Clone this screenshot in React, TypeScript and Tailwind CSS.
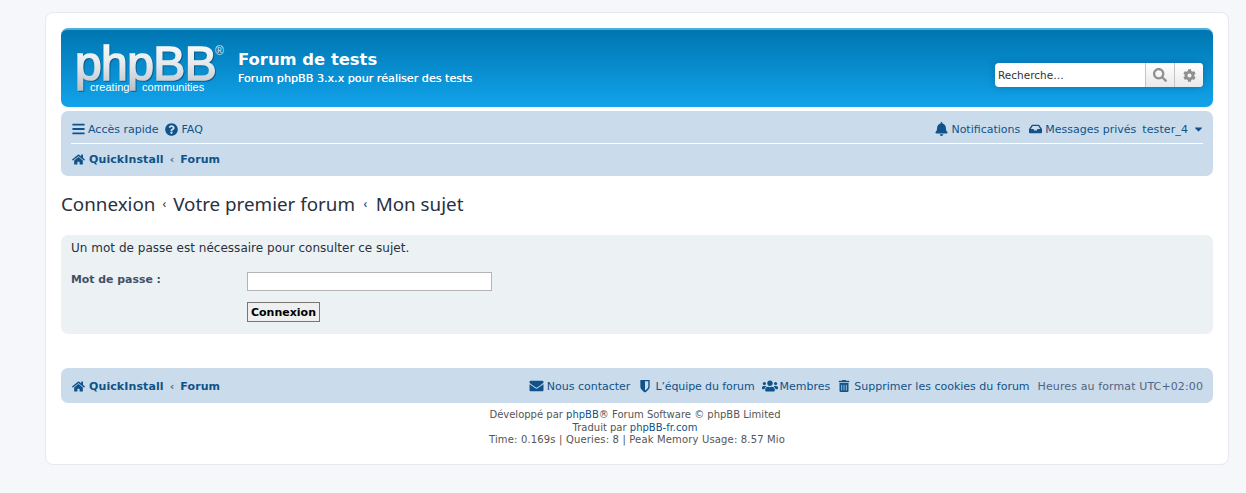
import React from 'react';
import { FaBars, FaQuestionCircle, FaHome, FaBell, FaInbox, FaEnvelope, FaUsers, FaTrashAlt, FaSearch, FaCog, FaCaretDown } from 'react-icons/fa';

const Logo = () => (
  <svg width="160" height="56" viewBox="0 0 160 56" className="shrink-0 overflow-visible">
    <defs>
      <linearGradient id="logoFill" x1="0" y1="0" x2="0" y2="1">
        <stop offset="0" stopColor="#ffffff" />
        <stop offset="0.55" stopColor="#e4e7ea" />
        <stop offset="1" stopColor="#b9c1c7" />
      </linearGradient>
    </defs>
    <text x="-2" y="38" fontFamily="'Liberation Sans', sans-serif" fontSize="48" letterSpacing="-0.6" fill="url(#logoFill)" stroke="url(#logoFill)" strokeWidth="1.6" className="[filter:drop-shadow(1px_1px_0_rgba(6,84,132,0.8))]">phpBB</text>
    <text x="138" y="13" fontFamily="'Liberation Sans', sans-serif" fontSize="12" fill="#dfe8ee">®</text>
    <text x="13" y="49" fontFamily="'Liberation Sans', sans-serif" fontSize="11" letterSpacing="0.05" fill="#ffffff">creating</text>
    <text x="65" y="49" fontFamily="'Liberation Sans', sans-serif" fontSize="11" letterSpacing="0.05" fill="#ffffff">communities</text>
  </svg>
);

const ShieldIcon = () => (
  <svg viewBox="0 0 12 15" className="w-[12px] h-[14px] mr-[4px]" fill="currentColor">
    <path fillRule="evenodd" d="M1 1h10v7c0 3-3 5-5 6.500c-2-1.500-5-3.500-5-6.500zM6 2.500v9.800c1.500-1 3.500-2.500 3.500-4.300v-5.500z" />
  </svg>
);

const Crumbs = () => (
  <span className="flex items-center font-bold text-[#105289] text-[11px] tracking-[0.1px] ml-px">
    <FaHome className="w-[13px] h-[13px] mr-[4px]" />
    <span>QuickInstall</span>
    <span className="mx-[6px] text-[#47708f]">‹</span>
    <span>Forum</span>
  </span>
);

export default function App() {
  return (
    <div className="min-h-[493px] bg-[#f5f7fa] pt-3 pl-[45px] font-['DejaVu_Sans','Verdana',sans-serif] text-[#536482] text-[11px] leading-[13px]">
      <div className="w-[1184px] h-[453px] bg-white border border-[#e6e9ed] rounded-[8px] px-[15px] pt-[15px]">
        <div className="h-[79px] rounded-[7px] bg-gradient-to-b from-[#0076b1] to-[#12a3eb] border-t-2 border-[#4fb0dd] flex pl-[16px] pr-[10px]">
          <div className="pt-[12px] w-[150px]">
            <Logo />
          </div>
          <div className="ml-[11px] pt-[19px] text-white">
            <div className="text-[16.4px] leading-[21px] font-bold">Forum de tests</div>
            <div className="mt-[2px] text-[11.15px] leading-[14px] [text-shadow:0_0_0.6px_white]">Forum phpBB 3.x.x pour réaliser des tests</div>
          </div>
          <div className="ml-auto mt-[33px] h-[24px] w-[208px] flex rounded-[4px] bg-white shadow-[0_0_6px_rgba(0,60,100,0.35)] overflow-hidden">
            <div className="w-[150px] pl-[3px] text-[10.5px] leading-[24px] text-[#333]">Recherche…</div>
            <div className="w-[29px] border-l border-[#c7c3bf] bg-gradient-to-b from-white to-[#e9e9e9] flex items-center justify-center">
              <FaSearch className="w-[14px] h-[14px] text-[#8f8f8f]" />
            </div>
            <div className="w-[29px] border-l border-[#c7c3bf] bg-gradient-to-b from-white to-[#e9e9e9] flex items-center justify-center">
              <FaCog className="w-[13px] h-[13px] text-[#8f8f8f]" />
            </div>
          </div>
        </div>

        <div className="mt-[4px] h-[65px] rounded-[7px] bg-[#cadceb] px-[10px] text-[#105289]">
          <div className="h-[33px] border-b border-white flex items-center justify-between pt-[4px]">
            <div className="flex items-center ml-px">
              <FaBars className="w-[13px] h-[14px] mr-[3px]" />
              <span className="mr-[7px]">Accès rapide</span>
              <FaQuestionCircle className="w-[13px] h-[13px] mr-[3px]" />
              <span>FAQ</span>
            </div>
            <div className="flex items-center">
              <FaBell className="w-[13px] h-[14px] mr-[3px]" />
              <span className="mr-[9px]">Notifications</span>
              <FaInbox className="w-[13px] h-[12px] mr-[3px]" />
              <span className="mr-[6px]">Messages privés</span>
              <span className="mr-[6px] tracking-[0.1px]">tester_4</span>
              <FaCaretDown className="w-[9px] h-[12px]" />
            </div>
          </div>
          <div className="h-[31px] flex items-center">
            <Crumbs />
          </div>
        </div>

        <h2 className="mt-[17px] text-[18.8px] leading-[22px] text-[#28313f] font-normal font-['Noto_Sans',sans-serif] flex items-center">
          <span>Connexion</span>
          <span className="mx-[7px] text-[12px]">‹</span>
          <span>Votre premier forum</span>
          <span className="mx-[8.5px] text-[12px]">‹</span>
          <span>Mon sujet</span>
        </h2>

        <div className="mt-[20px] h-[99px] rounded-[7px] bg-[#ecf1f3] px-[10px] pt-[6px] text-[#333]">
          <p className="text-[12px] leading-[14px] text-[#28313f] tracking-[0.02px]">Un mot de passe est nécessaire pour consulter ce sujet.</p>
          <div className="mt-[17px] flex">
            <label className="w-[176px] font-bold text-[#425067] text-[10.9px] pt-px">Mot de passe :</label>
            <div>
              <div className="w-[245px] h-[19px] bg-white border border-[#b4b4b4]" />
              <button className="mt-[11px] block w-[73px] h-[20px] bg-[#efefef] border border-[#767676] text-black font-bold text-[11px] leading-[17px]">Connexion</button>
            </div>
          </div>
        </div>

        <div className="mt-[34px] h-[35px] rounded-[7px] bg-[#cadceb] px-[10px] pt-px flex items-center justify-between text-[#105289]">
          <Crumbs />
          <div className="flex items-center">
            <FaEnvelope className="w-[15px] h-[14px] mr-[3px]" />
            <span className="mr-[9px]">Nous contacter</span>
            <ShieldIcon />
            <span className="mr-[7px] tracking-[-0.1px]">L’équipe du forum</span>
            <FaUsers className="w-[16px] h-[14px] mr-[2px]" />
            <span className="mr-[8px]">Membres</span>
            <FaTrashAlt className="w-[12px] h-[12px] mr-[4px]" />
            <span className="mr-[8px]">Supprimer les cookies du forum</span>
            <span className="text-[#536482] tracking-[0.115px]">Heures au format UTC+02:00</span>
          </div>
        </div>

        <div className="mt-[6px] text-center text-[10px] leading-[12.5px] text-[#555] w-[1148px]">
          <div>Développé par <span className="text-[#105289]">phpBB</span>® Forum Software © phpBB Limited</div>
          <div>Traduit par <span className="text-[#105289]">phpBB-fr.com</span></div>
          <div className="tracking-[0.16px] pl-[4px]">Time: 0.169s | Queries: 8 | Peak Memory Usage: 8.57 Mio</div>
        </div>
      </div>
    </div>
  );
}
